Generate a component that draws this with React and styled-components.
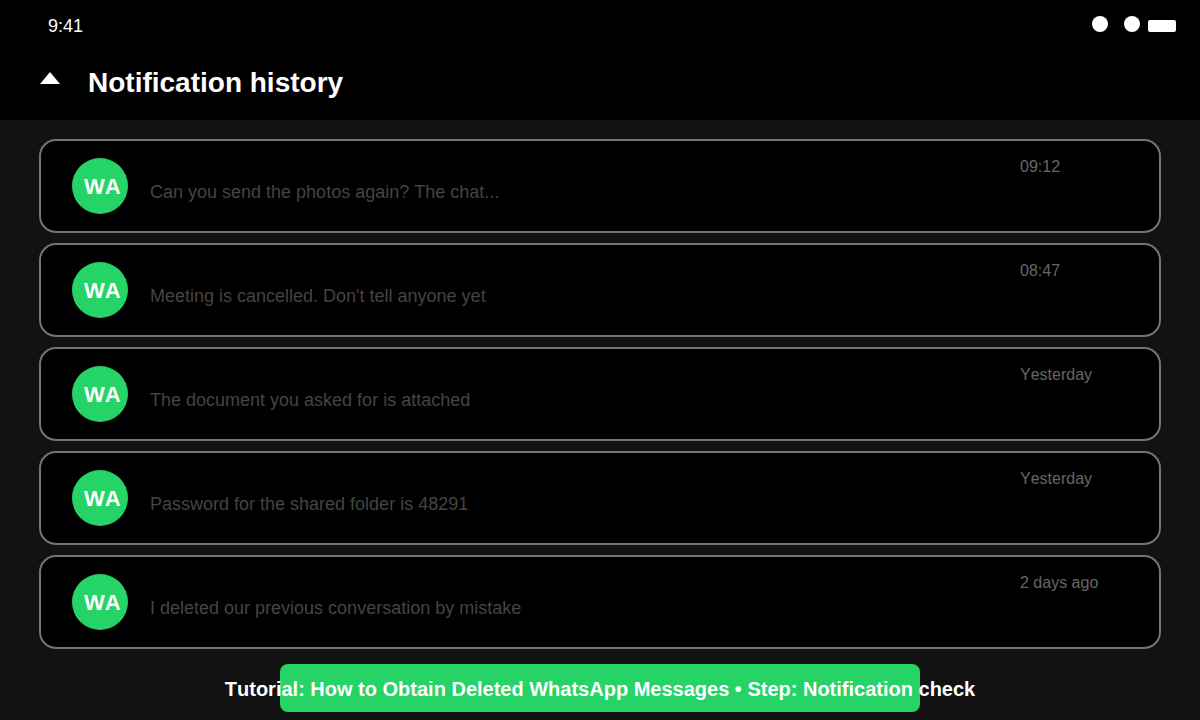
import React from 'react';
import styled, { createGlobalStyle } from 'styled-components';

const GlobalStyle = createGlobalStyle`
  * {
    box-sizing: border-box;
    margin: 0;
    padding: 0;
  }

  body {
    background: #121212;
    color: #fff;
    font-family: "Liberation Sans", Arial, Helvetica, sans-serif;
    font-kerning: none;
  }
`;

const Header = styled.header`
  padding: 14px 24px 20px 40px;
  background: #000;
`;

Header.Status = styled.div`
  display: flex;
  align-items: center;
  justify-content: space-between;
  padding-left: 8px;
  font-size: 18px;
  line-height: 24px;
`;

Header.Row = styled.div`
  display: flex;
  align-items: center;
  gap: 28px;
  margin-top: 28px;
`;

Header.Back = styled.button`
  display: flex;
  border: 0;
  background: none;
  color: inherit;
  cursor: pointer;
`;

Header.Title = styled.h1`
  font-size: 28px;
  line-height: 34px;
`;

const List = styled.ul`
  display: flex;
  flex-direction: column;
  gap: 10px;
  padding: 19px 39px 15px;
  list-style: none;
`;

const Card = styled.li`
  display: flex;
  align-items: flex-start;
  gap: 22px;
  padding: 17px 31px;
  border: 2px solid #747474;
  border-radius: 17px;
  background: #000;
`;

Card.Avatar = styled.span`
  flex: none;
  width: 56px;
  height: 56px;
  padding-left: 12px;
  border-radius: 50%;
  background: #25d366;
  font-size: 22px;
  font-weight: bold;
  line-height: 58px;
`;

Card.Message = styled.p`
  flex: 1;
  padding-top: 22px;
  color: #444;
  font-size: 18px;
  line-height: 24px;
`;

Card.Time = styled.time`
  flex: none;
  width: 108px;
  color: #666;
  font-size: 16px;
  line-height: 18px;
`;

const Banner = styled.footer`
  display: flex;
  justify-content: center;
  width: 640px;
  max-width: 100%;
  margin: 0 auto 8px;
  padding-top: 2px;
  border-radius: 8px;
  background: #25d366;
  font-size: 20px;
  font-weight: bold;
  line-height: 46px;
  white-space: nowrap;
`;

const notifications = [
  { message: 'Can you send the photos again? The chat...', time: '09:12' },
  { message: "Meeting is cancelled. Don't tell anyone yet", time: '08:47' },
  { message: 'The document you asked for is attached', time: 'Yesterday' },
  { message: 'Password for the shared folder is 48291', time: 'Yesterday' },
  { message: 'I deleted our previous conversation by mistake', time: '2 days ago' },
];

export default function App() {
  return (
    <>
      <GlobalStyle />
      <Header>
        <Header.Status>
          <span>9:41</span>
          <svg width="84" height="20" viewBox="0 0 84 20" fill="#fff" aria-hidden="true">
            <circle cx="8" cy="8" r="8" />
            <circle cx="40" cy="8" r="8" />
            <rect x="56" y="4" width="28" height="12" rx="2" />
          </svg>
        </Header.Status>
        <Header.Row>
          <Header.Back type="button">
            <svg width="20" height="22" viewBox="0 0 20 22" fill="currentColor" aria-hidden="true">
              <path d="M0 12 L10 0 L20 12 Z" />
            </svg>
          </Header.Back>
          <Header.Title>Notification history</Header.Title>
        </Header.Row>
      </Header>
      <List>
        {notifications.map(({ message, time }) => (
          <Card key={message}>
            <Card.Avatar>WA</Card.Avatar>
            <Card.Message>{message}</Card.Message>
            <Card.Time>{time}</Card.Time>
          </Card>
        ))}
      </List>
      <Banner>
        Tutorial: How to Obtain Deleted WhatsApp Messages • Step: Notification check
      </Banner>
    </>
  );
}
